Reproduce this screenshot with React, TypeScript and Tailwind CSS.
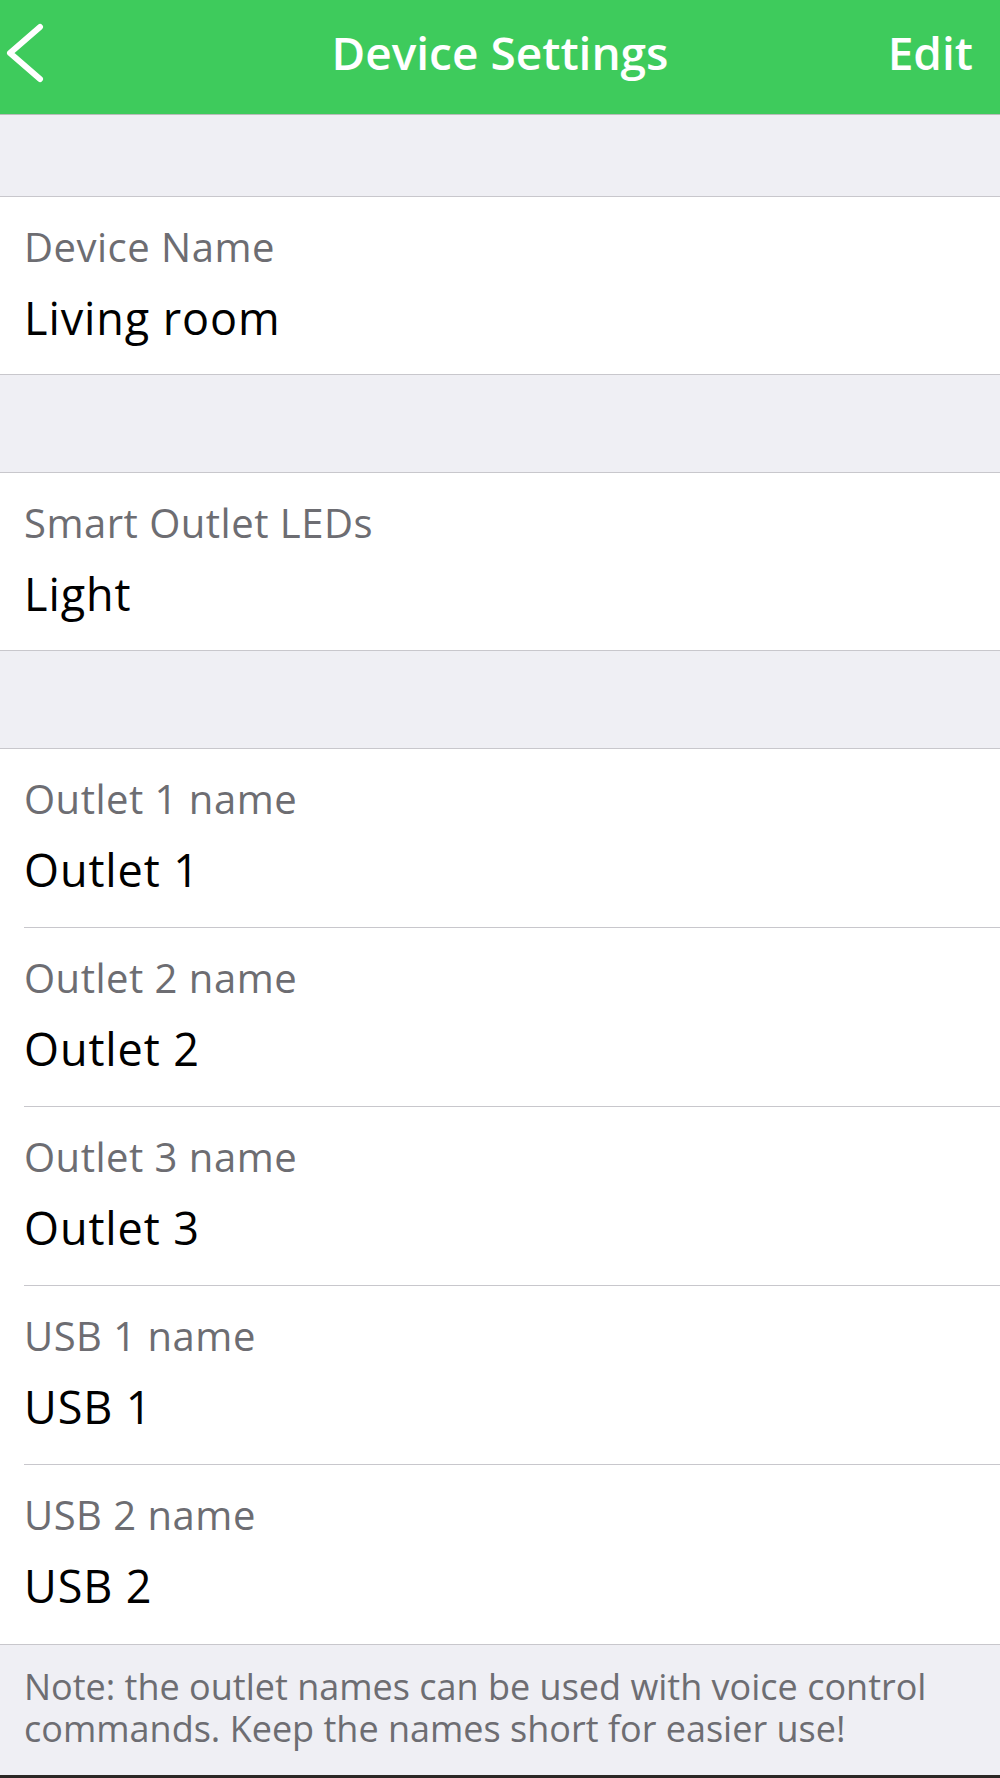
const font = { fontFamily: '"Open Sans", "Noto Sans", sans-serif' };

type Field = { label: string; value: string };

function Row({ label, value, last, tall }: Field & { last?: boolean; tall?: boolean }) {
  return (
    <div className="pl-6 bg-white">
      <div
        className={`${tall ? "h-[179px]" : "h-[177px]"} pt-[26px] ${
          last ? "" : "border-b border-[#c8c7cc]"
        }`}
      >
        <div className="text-[40px] leading-[48px] tracking-[0.5px] text-[#6d6d72]">{label}</div>
        <div className="mt-[20px] text-[45px] leading-[54px] tracking-[0.9px] text-black">
          {value}
        </div>
      </div>
    </div>
  );
}

function Section({ children }: { children: React.ReactNode }) {
  return <div className="border-y border-[#c8c7cc] bg-white">{children}</div>;
}

const outlets: Field[] = [
  { label: "Outlet 1 name", value: "Outlet 1" },
  { label: "Outlet 2 name", value: "Outlet 2" },
  { label: "Outlet 3 name", value: "Outlet 3" },
  { label: "USB 1 name", value: "USB 1" },
  { label: "USB 2 name", value: "USB 2" },
];

export default function App() {
  return (
    <div className="w-[1000px] h-[1778px] bg-[#efeff4] flex flex-col" style={font}>
      {/* Nav bar */}
      <div className="h-[115px] bg-[#3ecb5c] border-b border-[#b9bcb9] grid grid-cols-[1fr_auto_1fr] items-start">
        <div className="pt-[22px] pl-1">
          <svg width="40" height="62" viewBox="0 0 40 62" fill="none">
            <path
              d="M36 5 L6 31 L36 57"
              stroke="white"
              strokeWidth="6"
              strokeLinecap="round"
              strokeLinejoin="round"
            />
          </svg>
        </div>
        <div className="pt-[29px] text-[46px] leading-[46px] font-semibold text-white">
          Device Settings
        </div>
        <div className="pt-[29px] pr-[27px] text-right text-[46px] leading-[46px] font-semibold text-white">
          Edit
        </div>
      </div>

      <div className="h-[81px]" />
      <Section>
        <Row label="Device Name" value="Living room" last />
      </Section>

      <div className="h-[97px]" />
      <Section>
        <Row label="Smart Outlet LEDs" value="Light" last />
      </Section>

      <div className="h-[97px]" />
      <Section>
        {outlets.map((o, i) => (
          <Row key={o.label} {...o} tall last={i === outlets.length - 1} />
        ))}
      </Section>

      {/* Footer note */}
      <div className="flex-1 px-6 pt-[21px] text-[36px] leading-[42px] text-[#6d6d72]">
        Note: the outlet names can be used with voice control commands. Keep the names short for
        easier use!
      </div>
      <div className="h-[3px] bg-[#2b2725]" />
    </div>
  );
}
